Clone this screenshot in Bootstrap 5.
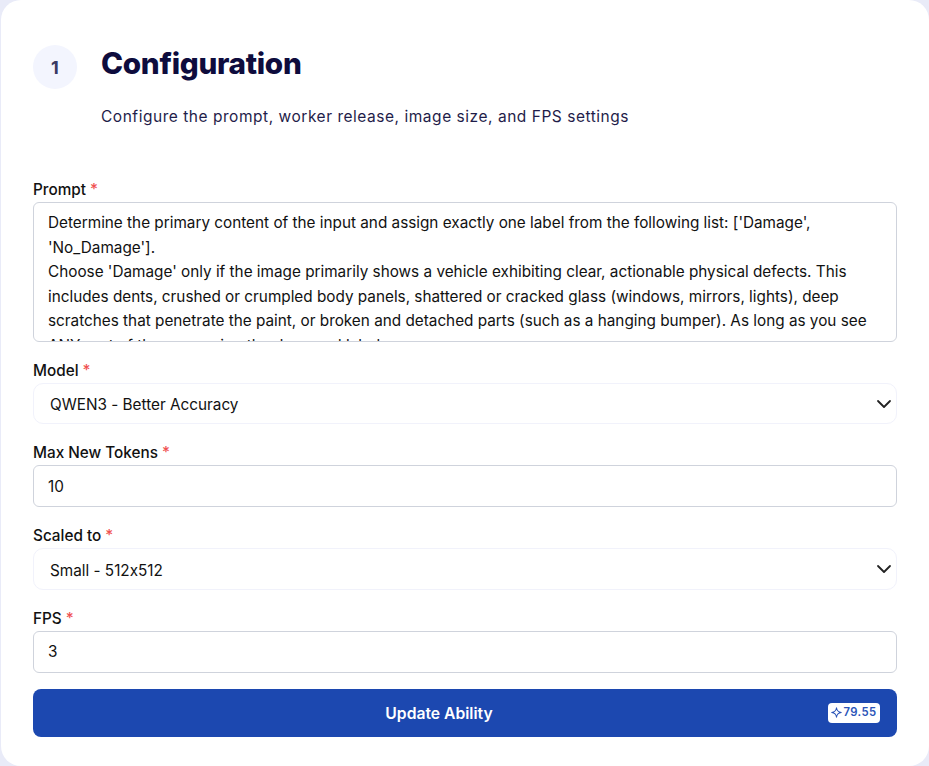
<!DOCTYPE html>
<html lang="en">
<head>
    <meta charset="UTF-8">
    <meta name="viewport" content="width=device-width, initial-scale=1.0">
    <title>Configuration</title>
    <link rel="stylesheet" href="https://cdn.jsdelivr.net/npm/bootstrap@5.3.0/dist/css/bootstrap.min.css">
    <style>
        html, body {
            height: 100%;
        }
        body {
            background-color: #e9ebf8;
            font-family: "Inter", sans-serif;
            font-feature-settings: "calt" 0;
            color: #111;
            overflow: hidden;
        }
        .config-panel {
            margin-left: 1px;
            height: 766px;
            background-color: #fff;
            border-radius: 20px;
            padding: 45px 32px 0 32px;
        }
        .step-circle {
            width: 44px;
            height: 44px;
            background-color: #f3f5fe;
            color: #3a3a63;
            font-weight: 700;
            font-size: 18px;
            flex-shrink: 0;
        }
        .step-head {
            gap: 24px;
            margin-bottom: 51px;
        }
        .step-title {
            font-family: "Inter", sans-serif;
            font-weight: 800;
            font-size: 29.7px;
            line-height: 36px;
            letter-spacing: -.3px;
            color: #0e0c3d;
            margin: 0 0 24px 0;
        }
        .step-sub {
            font-family: "Inter", sans-serif;
            font-size: 15.5px;
            line-height: 24px;
            letter-spacing: .53px;
            color: #1f1d4a;
            margin: 0;
        }
        .field-label {
            font-size: 15.3px;
            font-weight: 500;
            line-height: 20px;
            margin-bottom: 2px;
            display: block;
            color: #111;
        }
        .req {
            color: #f05252;
        }
        .prompt-box {
            height: 140px;
            padding: 8px 14px;
            font-size: 15.3px;
            line-height: 24.5px;
            font-feature-settings: "calt" 0;
            color: #111;
            border: 1px solid #cfd3dc;
            border-radius: 6px;
            resize: none;
            overflow: hidden;
            margin-bottom: 19px;
        }
        .prompt-box:focus,
        .num-input:focus,
        .pick-input:focus {
            box-shadow: none;
        }
        .pick-input {
            height: 41.4px;
            padding: 4px 40px 0 16px;
            font-size: 15.3px;
            font-feature-settings: "calt" 0;
            color: #111;
            border: 1px solid #f1f2fb;
            border-radius: 10px;
            margin-bottom: 19px;
            background-image: url("data:image/svg+xml,%3csvg xmlns='http://www.w3.org/2000/svg' viewBox='0 0 16 16'%3e%3cpath fill='none' stroke='%23222' stroke-linecap='round' stroke-linejoin='round' stroke-width='1.8' d='m2 5 6 6 6-6'/%3e%3c/svg%3e");
            background-size: 16px 16px;
            background-position: right 4px center;
        }
        .num-input {
            height: 42px;
            padding: 0 14px;
            font-size: 15.3px;
            color: #111;
            border: 1px solid #cfd3dc;
            border-radius: 6px;
            margin-bottom: 19px;
        }
        .field-last {
            margin-bottom: 16px;
        }
        .update-btn {
            height: 48px;
            padding: 0 17px;
            background-color: #1c48b0;
            border: 0;
            border-radius: 8px;
            color: #fff;
            font-size: 15.7px;
            font-weight: 600;
        }
        .update-btn:hover {
            background-color: #1c48b0;
            color: #fff;
        }
        .btn-label {
            padding-top: 2px;
        }
        .cost-tag {
            height: 20px;
            width: 52px;
            gap: 1px;
            background-color: #fff;
            color: #2a54b8;
            border-radius: 4px;
            font-size: 11.3px;
            font-weight: 600;
            letter-spacing: .4px;
        }
    </style>
</head>
<body>
    <div class="config-panel">
        <div class="d-flex step-head">
            <div class="step-circle rounded-circle d-flex align-items-center justify-content-center">1</div>
            <div>
                <h2 class="step-title">Configuration</h2>
                <p class="step-sub">Configure the prompt, worker release, image size, and FPS settings</p>
            </div>
        </div>

        <form>
            <label class="field-label" for="prompt">Prompt <span class="req">*</span></label>
            <textarea class="form-control prompt-box" id="prompt">Determine the primary content of the input and assign exactly one label from the following list: ['Damage', 'No_Damage'].
Choose 'Damage' only if the image primarily shows a vehicle exhibiting clear, actionable physical defects. This includes dents, crushed or crumpled body panels, shattered or cracked glass (windows, mirrors, lights), deep scratches that penetrate the paint, or broken and detached parts (such as a hanging bumper). As long as you see ANY part of the car, assign the damaged label.</textarea>

            <label class="field-label" for="model">Model <span class="req">*</span></label>
            <select class="form-select pick-input" id="model">
                <option>QWEN3 - Better Accuracy</option>
            </select>

            <label class="field-label" for="tokens">Max New Tokens <span class="req">*</span></label>
            <input type="text" class="form-control num-input" id="tokens" value="10">

            <label class="field-label" for="scale">Scaled to <span class="req">*</span></label>
            <select class="form-select pick-input" id="scale">
                <option>Small - 512x512</option>
            </select>

            <label class="field-label" for="fps">FPS <span class="req">*</span></label>
            <input type="text" class="form-control num-input field-last" id="fps" value="3">

            <button type="button" class="btn update-btn w-100 d-flex align-items-center">
                <span class="btn-label flex-grow-1 text-center">Update Ability</span>
                <span class="cost-tag d-flex align-items-center justify-content-center">
                    <svg width="11" height="11" viewBox="0 0 12 12" fill="none" stroke="currentColor" stroke-width="1.1" stroke-linejoin="round"><path d="M6 .8C6.4 3.9 8.1 5.6 11.2 6 8.1 6.4 6.4 8.1 6 11.2 5.6 8.1 3.9 6.4.8 6 3.9 5.6 5.6 3.9 6 .8Z"/></svg>
                    79.55
                </span>
            </button>
        </form>
    </div>
    <script src="https://cdn.jsdelivr.net/npm/bootstrap@5.3.0/dist/js/bootstrap.bundle.min.js"></script>
</body>
</html>
